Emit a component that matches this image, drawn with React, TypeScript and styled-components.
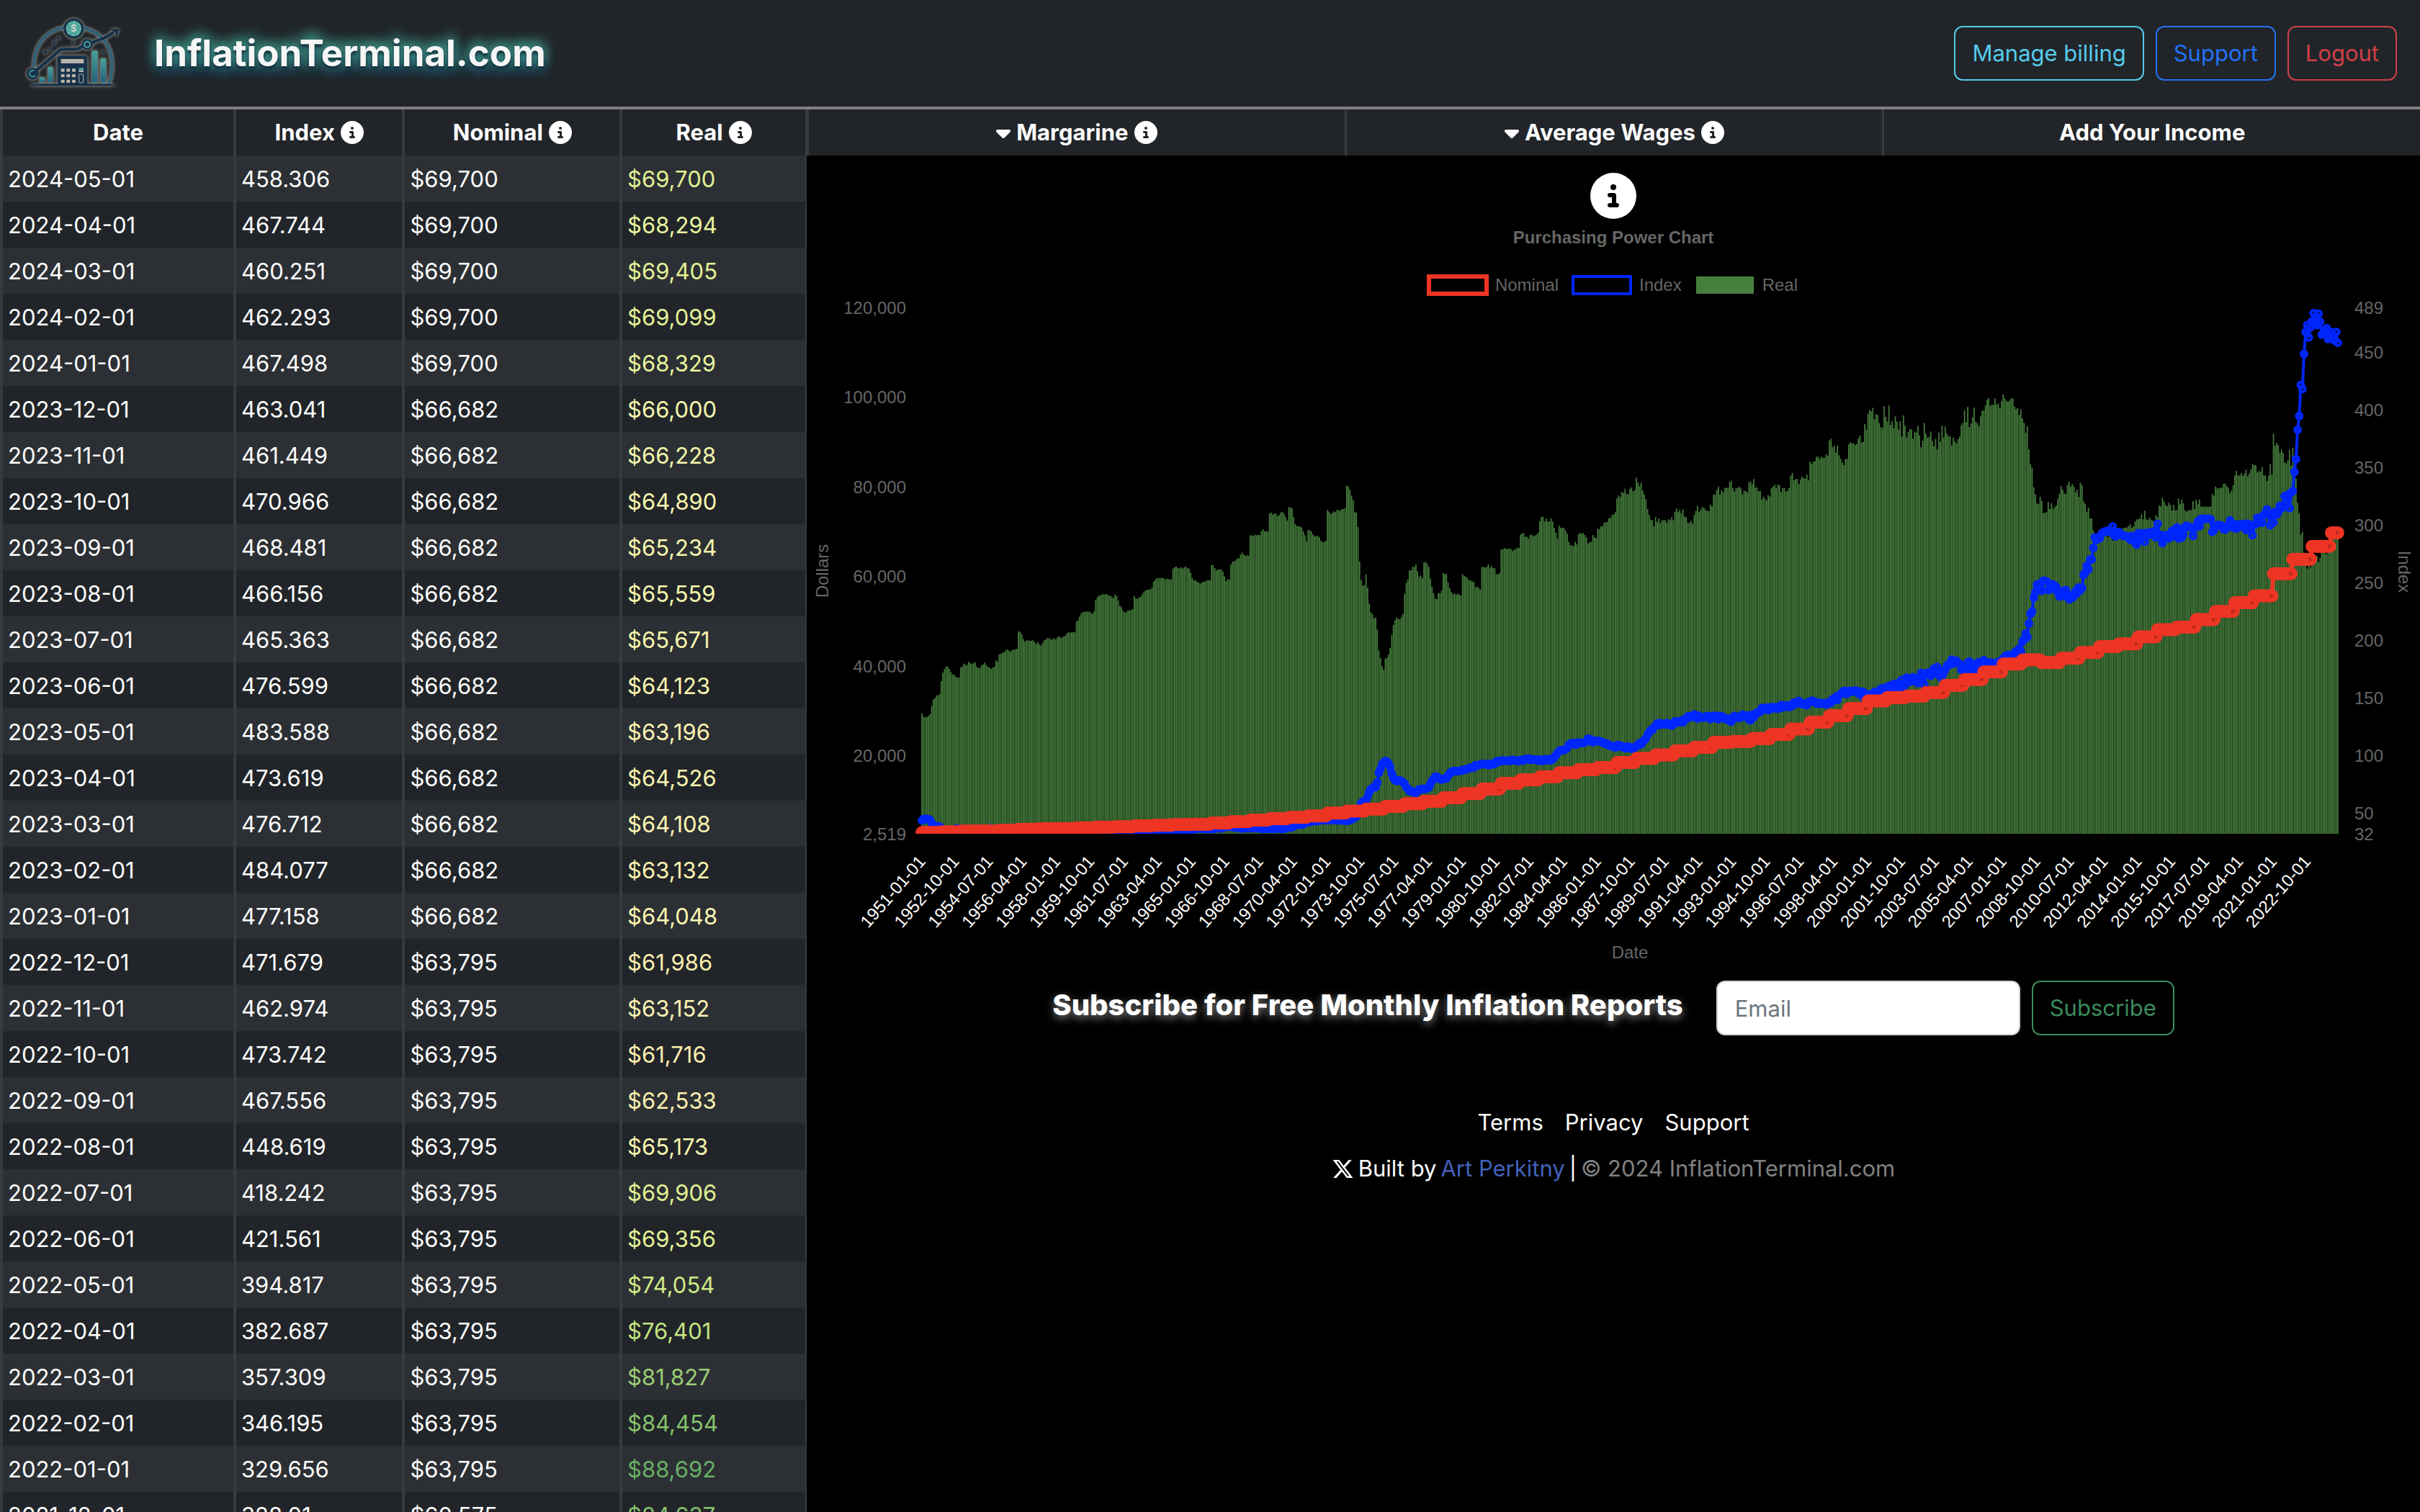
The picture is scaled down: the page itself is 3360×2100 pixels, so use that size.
import React from "react";
import styled, { createGlobalStyle } from "styled-components";
import { FaCaretDown, FaCircleInfo, FaXTwitter } from "react-icons/fa6";

const Global = createGlobalStyle`
  * { box-sizing: border-box; }
  body {
    margin: 0;
    background: #000;
    color: #fff;
    font-family: Inter, "Noto Sans", sans-serif;
    font-size: 31px;
    line-height: 48px;
  }
  button, input { font: inherit; }
`;

/* ---------- data ---------- */

type Row = [date: string, index: number, nominal: number, real: number];

const rows: Row[] = [
  ["2024-05-01", 458.306, 69700, 69700],
  ["2024-04-01", 467.744, 69700, 68294],
  ["2024-03-01", 460.251, 69700, 69405],
  ["2024-02-01", 462.293, 69700, 69099],
  ["2024-01-01", 467.498, 69700, 68329],
  ["2023-12-01", 463.041, 66682, 66000],
  ["2023-11-01", 461.449, 66682, 66228],
  ["2023-10-01", 470.966, 66682, 64890],
  ["2023-09-01", 468.481, 66682, 65234],
  ["2023-08-01", 466.156, 66682, 65559],
  ["2023-07-01", 465.363, 66682, 65671],
  ["2023-06-01", 476.599, 66682, 64123],
  ["2023-05-01", 483.588, 66682, 63196],
  ["2023-04-01", 473.619, 66682, 64526],
  ["2023-03-01", 476.712, 66682, 64108],
  ["2023-02-01", 484.077, 66682, 63132],
  ["2023-01-01", 477.158, 66682, 64048],
  ["2022-12-01", 471.679, 63795, 61986],
  ["2022-11-01", 462.974, 63795, 63152],
  ["2022-10-01", 473.742, 63795, 61716],
  ["2022-09-01", 467.556, 63795, 62533],
  ["2022-08-01", 448.619, 63795, 65173],
  ["2022-07-01", 418.242, 63795, 69906],
  ["2022-06-01", 421.561, 63795, 69356],
  ["2022-05-01", 394.817, 63795, 74054],
  ["2022-04-01", 382.687, 63795, 76401],
  ["2022-03-01", 357.309, 63795, 81827],
  ["2022-02-01", 346.195, 63795, 84454],
  ["2022-01-01", 329.656, 63795, 88692],
  ["2021-12-01", 328.01, 60575, 84637],
];

/* Average yearly wage, 1951 to 2021 */
const wages = [
  2799, 2973, 3139, 3156, 3301, 3532, 3642, 3674, 3856, 4007, 4087, 4291, 4397, 4576, 4659, 4938,
  5213, 5572, 5894, 6186, 6497, 7134, 7580, 8031, 8631, 9226, 9779, 10556, 11479, 12513, 13773,
  14531, 15239, 16135, 16823, 17322, 18427, 19334, 20100, 21028, 21812, 22935, 23133, 23754, 24706,
  25914, 27426, 28861, 30470, 32155, 32922, 33252, 34065, 35649, 36953, 38651, 40405, 41335, 40712,
  41674, 42980, 44322, 44888, 46482, 48099, 48642, 50322, 52146, 54100, 55629, 60575,
];

/* Real wage in hundreds of dollars, one line a year from 1951, twelve months each */
const realHundreds = `
294 286 286 285 288 292 310 325 328 334 334 337
366 385 393 399 398 393 386 381 380 375 374 374
396 398 405 402 402 409 406 404 406 408 398 395
396 401 403 407 402 398 396 393 396 398 412 409
426 427 429 430 434 437 434 431 435 436 437 438
477 476 471 460 454 457 457 456 456 457 453 449
453 448 446 452 457 459 462 462 459 459 462 459
463 466 463 463 466 467 472 475 474 475 475 475
499 502 510 517 520 521 521 521 521 519 516 522
547 553 557 557 560 560 560 560 557 557 554 551
559 556 546 534 531 523 519 520 524 524 524 527
556 550 550 553 554 560 566 568 570 570 571 575
588 592 596 596 596 596 596 593 594 594 593 593
617 620 622 618 618 620 617 620 622 618 617 608
596 591 591 588 586 584 586 588 588 591 591 591
625 625 618 613 615 615 615 610 600 589 594 592
626 632 634 635 640 640 648 653 648 645 647 646
691 692 689 693 692 692 692 701 705 700 701 700
740 742 738 740 740 734 736 742 744 740 732 724
754 754 752 732 716 712 712 711 709 700 692 678
703 703 700 693 689 690 690 687 679 676 677 679
748 744 739 741 745 743 748 748 746 750 750 752
802 800 793 780 770 743 742 710 633 591 579 580
604 574 539 520 515 506 508 481 434 417 399 391
416 418 426 440 469 491 502 508 505 504 509 516
560 585 593 613 613 621 621 626 611 599 601 596
631 632 628 621 595 576 562 550 549 562 562 568
607 605 605 586 573 565 560 562 559 561 559 557
605 600 599 596 591 591 588 588 575 577 574 570
620 621 619 621 626 619 623 618 618 605 604 607
660 660 663 661 661 662 661 656 659 660 664 663
693 696 696 688 688 684 692 693 689 691 693 697
723 732 733 722 729 722 722 729 722 708 697 684
713 708 708 708 702 695 677 670 669 667 677 671
693 697 695 696 692 687 673 676 677 692 687 685
706 705 711 712 719 721 721 730 730 737 738 743
774 780 777 788 786 795 784 783 795 798 790 792
820 809 801 809 791 782 772 750 737 726 725 712
732 721 729 719 725 725 725 719 727 725 732 725
744 751 744 748 740 749 733 732 720 719 724 717
737 746 757 743 748 754 753 748 746 745 760 756
782 782 793 800 782 792 787 798 797 797 810 813
797 789 797 797 800 796 783 791 790 787 809 812
805 817 798 798 790 790 771 778 773 769 781 778
797 800 804 797 805 803 788 797 797 789 791 797
825 831 814 817 817 806 816 822 819 818 827 814
856 851 856 857 867 867 862 867 864 864 872 869
903 907 888 892 876 892 870 862 854 848 862 862
895 899 897 897 893 895 907 914 898 900 940 927
963 971 968 976 950 962 960 942 933 931 980 956
945 981 938 946 931 957 945 927 946 912 959 936
910 922 928 928 907 923 921 936 914 888 903 942
918 909 911 923 902 890 907 883 921 900 936 910
934 918 912 913 892 909 901 897 906 912 937 942
970 944 978 933 941 955 976 945 942 935 957 970
970 981 994 998 981 983 983 997 983 986 975 991
1006 997 992 989 992 997 997 979 973 976 960 973
952 942 920 935 883 850 842 799 783 763 761 777
768 741 742 743 766 750 763 751 754 758 773 784
801 793 785 784 804 811 800 806 800 787 793 777
809 803 767 761 744 753 729 729 703 681 686 684
704 695 692 690 690 688 690 690 680 698 700 692
700 705 706 708 708 709 712 716 708 711 722 727
727 729 738 727 746 727 726 731 726 724 723 736
732 758 756 775 767 759 756 764 759 747 759 747
748 773 761 771 763 747 744 747 748 748 767 750
771 761 771 755 755 756 755 755 755 756 784 780
800 797 796 797 798 806 807 801 798 786 792 803
825 835 825 825 830 824 829 838 823 829 838 851
848 848 832 835 833 844 825 825 813 825 850 827
918 891 898 893 876 883 875 854 852 859 882 846
`;

const baseIndex = 458.306;

type Point = { date: string; index: number; nominal: number; real: number };

const history: Point[] = realHundreds
  .trim()
  .split(/\s+/)
  .map((value, i) => {
    const real = Number(value) * 100;
    const nominal = wages[Math.floor(i / 12)];
    const month = String((i % 12) + 1).padStart(2, "0");
    return {
      date: `${1951 + Math.floor(i / 12)}-${month}-01`,
      nominal,
      real,
      index: (nominal * baseIndex) / real,
    };
  });

const recent: Point[] = rows
  .slice(0, 29)
  .reverse()
  .map(([date, index, nominal, real]) => ({ date, index, nominal, real }));

const series = [...history, ...recent];

const scale: [number, number[]][] = [
  [61000, [254, 236, 174]],
  [64000, [252, 246, 178]],
  [66500, [244, 247, 172]],
  [69700, [226, 241, 148]],
  [76401, [196, 228, 128]],
  [81827, [156, 205, 116]],
  [84454, [134, 194, 108]],
  [88692, [104, 176, 101]],
];

function realColor(value: number) {
  const i = Math.max(1, scale.findIndex(([stop]) => stop >= value));
  const [a, from] = scale[i - 1];
  const [b, to] = scale[i];
  const t = (value - a) / (b - a);
  return `rgb(${from.map((c, k) => Math.round(c + (to[k] - c) * t)).join(",")})`;
}

const money = (value: number) => "$" + value.toLocaleString("en-US");

/* ---------- shared parts ---------- */

const outlines = {
  info: "#56cbec",
  primary: "#2272f6",
  danger: "#ce4048",
  success: "#3a8a5c",
};

const OutlineButton = styled.button<{ $tone: keyof typeof outlines }>`
  padding: 12px 23px;
  border: 2px solid ${(p) => outlines[p.$tone]};
  border-radius: 12px;
  background: transparent;
  color: ${(p) => outlines[p.$tone]};
  line-height: 48px;
  cursor: pointer;
`;

const InfoIcon = styled(FaCircleInfo)`
  width: 32px;
  height: 32px;
  flex: none;
`;

/* ---------- header ---------- */

const Page = styled.div`
  display: flex;
  flex-direction: column;
  height: 100vh;
`;

const TopBar = styled.header`
  display: flex;
  align-items: center;
  justify-content: space-between;
  padding: 20px 32px;
  border-bottom: 4px solid #808080;
  background: #212529;
`;

const Brand = styled.a`
  display: flex;
  align-items: center;
  gap: 46px;
  color: #f6f6f6;
  text-decoration: none;
`;

const BrandName = styled.span`
  font-size: 51px;
  font-weight: 700;
  line-height: 64px;
  text-shadow:
    0 4px 4px #10303c,
    0 -4px 16px #48ac9c,
    0 -4px 20px #3c9488,
    0 10px 16px #1e5276;
`;

const LogoArt = styled.svg`
  width: 136px;
  height: 108px;
  filter: drop-shadow(0 0 2px rgba(214, 206, 190, 0.9));
`;

const Actions = styled.div`
  display: flex;
  gap: 16px;
`;

function Star({ x, y, r }: { x: number; y: number; r: number }) {
  const k = r / 4;
  return (
    <path
      d={`M${x} ${y - r}L${x + k} ${y - k}L${x + r} ${y}L${x + k} ${y + k}L${x} ${y + r}L${x - k} ${y + k}L${x - r} ${y}L${x - k} ${y - k}Z`}
      fill="#17324a"
    />
  );
}

function Logo() {
  return (
    <LogoArt viewBox="97 62 408 324" aria-hidden="true">
      <defs>
        <linearGradient id="bar" x1="0" y1="0" x2="0" y2="1">
          <stop offset="0" stopColor="#46a39a" />
          <stop offset="1" stopColor="#24607c" />
        </linearGradient>
      </defs>
      <path d="M142 282C142 190 190 128 272 116M344 118C430 136 468 200 468 272Q468 325 452 354" fill="none" stroke="#2c6078" strokeWidth="11" />
      <path d="M122 360Q140 351 165 351H445Q468 351 486 360Z" fill="#17324a" />
      <rect x="166" y="325" width="21" height="21" fill="url(#bar)" />
      <rect x="201" y="281" width="20" height="65" fill="url(#bar)" />
      <rect x="384" y="214" width="23" height="132" fill="url(#bar)" />
      <rect x="420" y="246" width="22" height="100" fill="url(#bar)" />
      <path d="M240 354V246Q240 234 252 234H353Q365 234 365 246V354Z" fill="#17324a" />
      <rect x="255" y="248" width="95" height="18" fill="#b9b4a9" />
      {[288, 311, 334].map((y) =>
        [255, 278, 301].map((x) => <rect key={`${x}-${y}`} x={x} y={y} width="15" height="13" rx="3" fill="#b9b4a9" />)
      )}
      <rect x="329" y="285" width="20" height="10" rx="3" fill="#46a39a" />
      <rect x="329" y="295" width="20" height="7" fill="#b9b4a9" />
      <rect x="330" y="311" width="18" height="36" rx="3" fill="none" stroke="#b9b4a9" strokeWidth="3" />
      <path d="M137 309L248 213Q256 207 266 207H318Q326 206 334 201L364 187L440 158L476 136" fill="none" stroke="#17324a" strokeWidth="13" />
      <path d="M497 122L458 124L478 135L488 156Z" fill="#17324a" />
      <circle cx="137" cy="309" r="25" fill="#17324a" />
      <path d="M144 297A13 13 0 1 0 148 316" fill="none" stroke="#46a39a" strokeWidth="5" />
      <circle cx="364" cy="187" r="23" fill="#17324a" />
      <circle cx="364" cy="187" r="12" fill="none" stroke="#46a39a" strokeWidth="6" />
      <circle cx="308" cy="121" r="42" fill="#17324a" />
      <circle cx="308" cy="121" r="32" fill="#4fa79c" />
      <circle cx="308" cy="121" r="28" fill="none" stroke="#d8d6cc" strokeWidth="5" strokeDasharray="3 19" />
      <text x="308" y="135" textAnchor="middle" fontFamily="Inter, sans-serif" fontSize="40" fontWeight="600" fill="#d8d6cc">$</text>
      <Star x={190} y={219} r={13} />
      <Star x={210} y={207} r={10} />
      <Star x={227} y={180} r={13} />
      <Star x={245} y={160} r={12} />
      <Star x={306} y={181} r={10} />
      <Star x={430} y={219} r={11} />
    </LogoArt>
  );
}

/* ---------- data table ---------- */

const Body = styled.div`
  display: flex;
  flex: 1;
  min-height: 0;
`;

const TablePane = styled.section`
  flex: 1;
  min-width: 0;
  overflow-y: auto;
  scrollbar-width: none;
`;

const DataTable = styled.table`
  width: 100%;
  table-layout: fixed;
  border-collapse: collapse;
  background: #212529;
  border-right: 2px solid #373b3e;
`;

const HeadCell = styled.th<{ $width: number }>`
  width: ${(p) => p.$width}%;
  padding: 8px;
  border-left: 4px solid #373b3e;
  font-weight: 700;
`;

const HeadLabel = styled.span`
  display: flex;
  align-items: center;
  justify-content: center;
  gap: 8px;
`;

const BodyRow = styled.tr`
  &:nth-child(odd) {
    background: #2c3034;
  }
`;

const Cell = styled.td<{ $color?: string }>`
  padding: 9px 7px 7px;
  border-left: 4px solid #373b3e;
  color: ${(p) => p.$color ?? "#fff"};
`;

const columns: [string, number, boolean][] = [
  ["Date", 29, false],
  ["Index", 21, true],
  ["Nominal", 27, true],
  ["Real", 23, true],
];

/* ---------- right side ---------- */

const MainPane = styled.main`
  flex: 2;
  min-width: 0;
`;

const Filters = styled.nav`
  display: grid;
  grid-template-columns: repeat(3, 1fr);
  background: #212529;
`;

const FilterButton = styled.button`
  display: flex;
  align-items: center;
  justify-content: center;
  gap: 8px;
  padding: 8px;
  border: 0;
  border-left: 3px solid #373b3e;
  background: transparent;
  color: #fff;
  font-weight: 700;
  line-height: 48px;
  cursor: pointer;
`;

const Caret = styled(FaCaretDown)`
  width: 20px;
  height: 32px;
`;

const ChartBlock = styled.figure`
  display: flex;
  flex-direction: column;
  align-items: center;
  margin: 0;
  padding-top: 24px;
  color: #666;
  font-family: "Liberation Sans", Arial, sans-serif;
  font-size: 24px;
  line-height: 28px;
`;

const ChartInfo = styled.button`
  display: flex;
  padding: 0;
  border: 0;
  background: transparent;
  color: #fff;
  font-size: 64px;
  cursor: pointer;
`;

const ChartTitle = styled.figcaption`
  padding: 12px 0 38px;
  font-weight: 700;
`;

const Legend = styled.ul`
  display: flex;
  gap: 20px;
  margin: 0;
  padding: 0;
  list-style: none;
`;

const LegendItem = styled.li`
  display: flex;
  align-items: center;
  gap: 12px;
`;

const Swatch = styled.span<{ $color: string; $stroke: number }>`
  width: 80px;
  height: 24px;
  background: ${(p) => (p.$stroke ? "transparent" : p.$color)};
  outline: ${(p) => p.$stroke}px solid ${(p) => p.$color};
  outline-offset: -${(p) => p.$stroke / 2}px;
`;

const Plot = styled.svg`
  display: block;
  width: 100%;
  height: auto;
  fill: #666;
`;

const colors = { nominal: "#ee3524", index: "#0026ff", real: "#47803e" };

const plot = { left: 159, right: 2127, top: 17, bottom: 748 };
const step = (plot.right - plot.left) / series.length;
const xAt = (i: number) => plot.left + (i + 0.5) * step;
const dollarY = (v: number) => plot.bottom - ((v - 2519) / (120000 - 2519)) * (plot.bottom - plot.top);
const indexY = (v: number) => plot.bottom - ((v - 32) / (489 - 32)) * (plot.bottom - plot.top);

const dollarTicks = [120000, 100000, 80000, 60000, 40000, 20000, 2519];
const indexTicks = [489, 450, 400, 350, 300, 250, 200, 150, 100, 50, 32];

function LineSeries({ color, width, radius, y }: { color: string; width: number; radius: number; y: (p: Point) => number }) {
  return (
    <g>
      <polyline points={series.map((p, i) => `${xAt(i)},${y(p)}`).join(" ")} fill="none" stroke={color} strokeWidth={width} />
      {series.map((p, i) => (
        <circle key={p.date} cx={xAt(i)} cy={y(p)} r={radius} fill="rgba(0,0,0,0.1)" stroke={color} strokeWidth={width} />
      ))}
    </g>
  );
}

function PurchasingPowerPlot() {
  return (
    <Plot viewBox="0 0 2240 930" role="img" aria-label="Purchasing Power Chart">
      <defs>
        <clipPath id="area">
          <rect x={plot.left - 12} y="0" width={plot.right - plot.left + 24} height={plot.bottom} />
        </clipPath>
      </defs>
      {dollarTicks.map((v) => (
        <text key={v} x="138" y={dollarY(v) + 9} textAnchor="end">{v.toLocaleString("en-US")}</text>
      ))}
      {indexTicks.map((v) => (
        <text key={v} x="2149" y={indexY(v) + 9}>{v}</text>
      ))}
      <text transform="translate(30 383) rotate(-90)" textAnchor="middle">Dollars</text>
      <text transform="translate(2210 384) rotate(90)" textAnchor="middle">Index</text>
      <text x="1143" y="921" textAnchor="middle">Date</text>
      {series.map((p, i) =>
        i % 21 === 0 && i < 875 ? (
          <text key={p.date} transform={`translate(${xAt(i)} 782) rotate(-49)`} y="8" textAnchor="end" fill="#fff">{p.date}</text>
        ) : null
      )}
      <g fill={colors.real}>
        {series.map((p, i) => (
          <rect key={p.date} x={xAt(i) - step * 0.38} y={dollarY(p.real)} width={step * 0.76} height={plot.bottom - dollarY(p.real)} />
        ))}
      </g>
      <g clipPath="url(#area)">
        <LineSeries color={colors.index} width={4} radius={4} y={(p) => indexY(p.index)} />
        <LineSeries color={colors.nominal} width={6} radius={6} y={(p) => dollarY(p.nominal)} />
      </g>
    </Plot>
  );
}

const SubscribeForm = styled.form`
  display: flex;
  align-items: center;
  justify-content: center;
  gap: 16px;
  padding-top: 22px;
`;

const SubscribeLabel = styled.label`
  margin-right: 30px;
  padding-bottom: 8px;
  font-size: 40px;
  font-weight: 800;
  text-shadow: 0 4px 12px rgba(255, 255, 255, 0.5);
`;

const EmailInput = styled.input`
  width: 422px;
  height: 76px;
  padding: 12px 24px;
  border: 2px solid #ced4da;
  border-radius: 12px;
  background: #fff;
  color: #212529;
  line-height: 48px;
  &::placeholder {
    color: #6c757d;
    opacity: 1;
  }
`;

const Footer = styled.footer`
  display: flex;
  flex-direction: column;
  align-items: center;
  gap: 16px;
  padding-top: 97px;
`;

const FooterLinks = styled.div`
  display: flex;
  gap: 30px;
`;

const FooterLink = styled.a<{ $accent?: boolean }>`
  color: ${(p) => (p.$accent ? "#4262ba" : "#fff")};
  text-decoration: none;
`;

const Credits = styled.div`
  display: flex;
  align-items: center;
  gap: 6px;
`;

const Copyright = styled.span`
  color: #808080;
`;

export default function App() {
  return (
    <Page>
      <Global />
      <TopBar>
        <Brand href="#home">
          <Logo />
          <BrandName>InflationTerminal.com</BrandName>
        </Brand>
        <Actions>
          <OutlineButton $tone="info">Manage billing</OutlineButton>
          <OutlineButton $tone="primary">Support</OutlineButton>
          <OutlineButton $tone="danger">Logout</OutlineButton>
        </Actions>
      </TopBar>
      <Body>
        <TablePane>
          <DataTable>
            <thead>
              <tr>
                {columns.map(([name, width, info]) => (
                  <HeadCell key={name} $width={width} scope="col">
                    <HeadLabel>
                      {name}
                      {info && <InfoIcon />}
                    </HeadLabel>
                  </HeadCell>
                ))}
              </tr>
            </thead>
            <tbody>
              {rows.map(([date, index, nominal, real]) => (
                <BodyRow key={date}>
                  <Cell>{date}</Cell>
                  <Cell>{index}</Cell>
                  <Cell>{money(nominal)}</Cell>
                  <Cell $color={realColor(real)}>{money(real)}</Cell>
                </BodyRow>
              ))}
            </tbody>
          </DataTable>
        </TablePane>
        <MainPane>
          <Filters>
            <FilterButton>
              <Caret />
              Margarine
              <InfoIcon />
            </FilterButton>
            <FilterButton>
              <Caret />
              Average Wages
              <InfoIcon />
            </FilterButton>
            <FilterButton>Add Your Income</FilterButton>
          </Filters>
          <ChartBlock>
            <ChartInfo aria-label="About this chart">
              <FaCircleInfo />
            </ChartInfo>
            <ChartTitle>Purchasing Power Chart</ChartTitle>
            <Legend>
              <LegendItem>
                <Swatch $color={colors.nominal} $stroke={6} />
                Nominal
              </LegendItem>
              <LegendItem>
                <Swatch $color={colors.index} $stroke={4} />
                Index
              </LegendItem>
              <LegendItem>
                <Swatch $color={colors.real} $stroke={0} />
                Real
              </LegendItem>
            </Legend>
            <PurchasingPowerPlot />
          </ChartBlock>
          <SubscribeForm>
            <SubscribeLabel htmlFor="email">Subscribe for Free Monthly Inflation Reports</SubscribeLabel>
            <EmailInput id="email" type="email" placeholder="Email" />
            <OutlineButton type="button" $tone="success">Subscribe</OutlineButton>
          </SubscribeForm>
          <Footer>
            <FooterLinks>
              <FooterLink href="#terms">Terms</FooterLink>
              <FooterLink href="#privacy">Privacy</FooterLink>
              <FooterLink href="#support">Support</FooterLink>
            </FooterLinks>
            <Credits>
              <FaXTwitter />
              <span>Built by</span>
              <FooterLink href="#author" $accent>Art Perkitny</FooterLink>
              <span>|</span>
              <Copyright>© 2024 InflationTerminal.com</Copyright>
            </Credits>
          </Footer>
        </MainPane>
      </Body>
    </Page>
  );
}
